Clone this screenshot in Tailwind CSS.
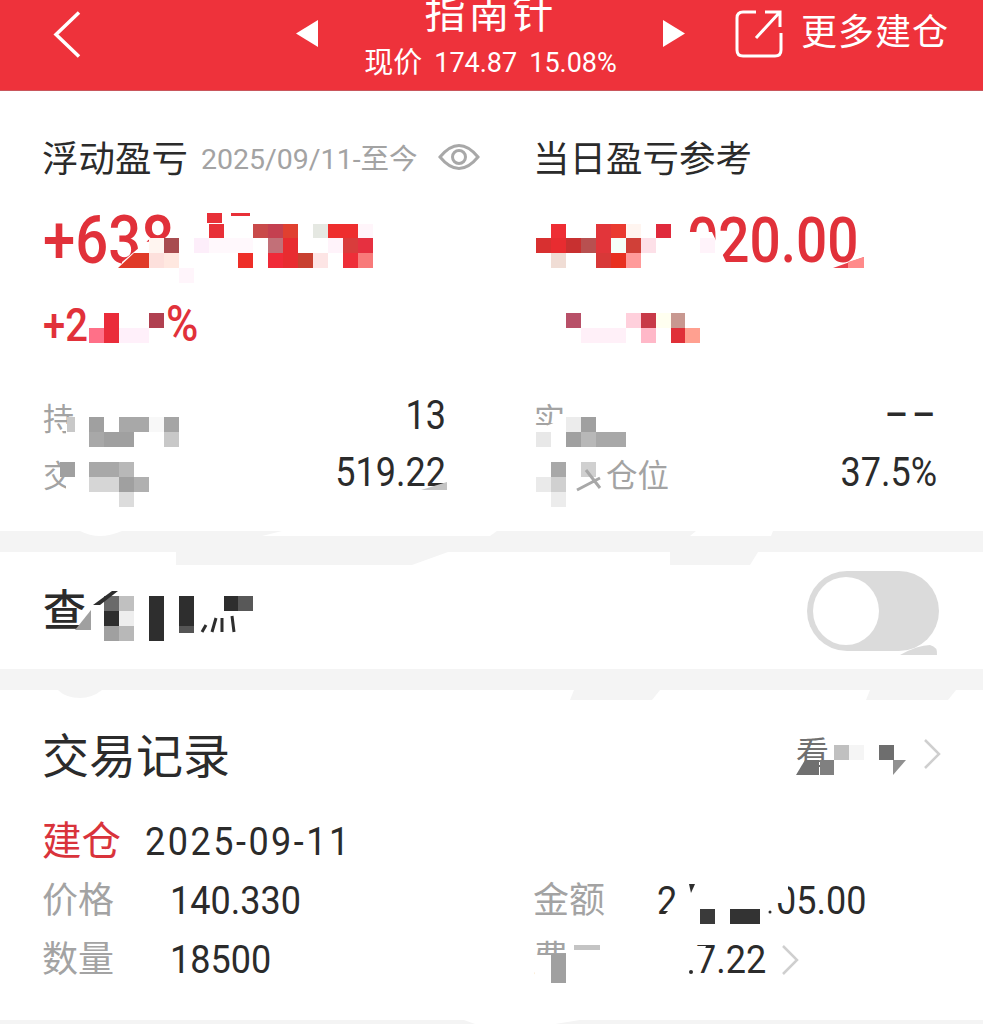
<!DOCTYPE html>
<html lang="zh">
<head>
  <meta charset="UTF-8" />
  <title>指南针</title>
  <script src="https://cdn.jsdelivr.net/npm/@tailwindcss/browser@4"></script>
</head>
<body class="bg-white">
  <div class="relative w-[983px] h-[1024px] overflow-hidden bg-white text-[#2b2b2b] font-['Roboto','Noto_Sans_CJK_SC',sans-serif]">

    <!-- Header -->
    <header class="h-[91px] bg-[#ee323b] border-b border-b-[#c9565c] flex items-start text-white overflow-hidden">
      <svg class="ml-[53px] mt-[11px] w-[28px] h-[47px]" viewBox="0 0 28 47" fill="none" stroke="white" stroke-width="3.5"><path d="M26 1.5 3 23.5 26 45.5"/></svg>
      <svg class="ml-[215px] mt-[20px] w-[22px] h-[27px]" viewBox="0 0 22 27" fill="white"><path d="M22 0V27L0 13.5Z"/></svg>
      <div class="w-[345px] flex flex-col items-center">
        <div class="text-[41px] leading-[44px] mt-[-8px] tracking-[3px]">指南针</div>
        <div class="flex items-center gap-[12px] text-[27px] leading-[32px] mt-[11px] whitespace-nowrap"><span class="text-[29px]">现价</span><span>174.87</span><span>15.08%</span></div>
      </div>
      <svg class="mt-[20px] w-[22px] h-[27px]" viewBox="0 0 22 27" fill="white"><path d="M0 0V27L22 13.5Z"/></svg>
      <svg class="ml-[50px] mt-[9px] w-[49px] h-[50px]" viewBox="0 0 49 50" fill="none" stroke="white" stroke-width="3"><path d="M21 3H8Q2 3 2 9V41Q2 47 8 47H40Q46 47 46 41V24"/><path d="M21 29 44 4M30 3H45V18"/></svg>
      <div class="ml-[17px] mt-[12px] text-[36px] leading-[42px] tracking-[1px] whitespace-nowrap">更多建仓</div>
    </header>

    <!-- Summary -->
    <section class="h-[440px] grid grid-cols-[491px_1fr] pl-[43px]">
      <div class="flex flex-col">
        <div class="flex items-center h-[46px] mt-[46px]">
          <span class="text-[36.5px] ml-[-1px]">浮动盈亏</span>
          <span class="ml-[13px] text-[28.5px] text-[#a3a3a3] whitespace-nowrap">2025/09/11-至今</span>
          <svg class="ml-[20px] w-[42px] h-[30px] mt-[-6px]" viewBox="0 0 42 30" fill="none" stroke="#a8a8a8" stroke-width="3"><path d="M2 15Q21 -8 40 15 21 38 2 15Z"/><circle cx="21" cy="15" r="6.5"/></svg>
        </div>
        <div class="mt-[28px] h-[58px] text-[58px] leading-[58px] font-medium text-[#e1313a] origin-center scale-y-115">+638</div>
        <div class="mt-[33px] h-[44px] text-[40px] leading-[44px] font-medium text-[#e1313a] origin-center scale-y-115">+2<span class="ml-[78px] text-[44px]">%</span></div>
        <div class="mt-[47px] w-[403px] flex justify-between items-center h-[44px]"><span class="text-[31px] text-[#a3a3a3] mt-[10px]">持</span><span class="text-[36px] origin-center scale-y-115">13</span></div>
        <div class="mt-[13px] w-[403px] flex justify-between items-center h-[44px]"><span class="text-[31px] text-[#a3a3a3] mt-[10px]">交</span><span class="text-[36px] origin-center scale-y-115">519.22</span></div>
      </div>
      <div class="flex flex-col">
        <div class="flex items-center h-[46px] mt-[46px]"><span class="text-[36.5px] ml-[-1px]">当日盈亏参考</span></div>
        <div class="mt-[28px] h-[58px] pl-[153px] text-[55px] leading-[58px] font-medium text-[#e1313a] origin-center scale-y-115">020.00</div>
        <div class="mt-[33px] h-[44px]"></div>
        <div class="mt-[47px] w-[403px] flex justify-between items-center h-[44px]"><span class="text-[31px] text-[#a3a3a3] mt-[10px]">实</span><span class="text-[36px] font-medium tracking-[4px] mr-[-2px]">––</span></div>
        <div class="mt-[13px] w-[403px] flex justify-between items-center h-[44px]"><span class="text-[31.5px] text-[#a3a3a3] pl-[72px] mt-[10px]">仓位</span><span class="text-[36px] origin-center scale-y-115">37.5%</span></div>
      </div>
    </section>

    <div class="h-[21px] bg-[#f4f4f4]"></div>

    <!-- Toggle row -->
    <section class="h-[117px] pl-[43px] pr-[43px] flex items-center justify-between">
      <span class="text-[43px] mt-[2px] font-medium">查</span>
      <svg class="w-[134px] h-[86px] mt-[6px]" viewBox="0 0 134 86">
        <rect x="1" y="0" width="132" height="80" rx="40" fill="#dbdbdb"/>
        <path d="M94 84Q112 74 124 74 132 76 131 84Z" fill="#dbdbdb"/>
        <ellipse cx="40" cy="40" rx="33" ry="34" fill="white"/>
      </svg>
    </section>

    <div class="h-[21px] bg-[#f4f4f4]"></div>

    <!-- Trade records -->
    <section class="pl-[43px]">
      <div class="h-[134px] pt-[42px] flex items-start justify-between pr-[42px]">
        <span class="text-[47px] leading-[50px] ml-[-1px]">交易记录</span>
        <div class="flex items-center h-[40px] mt-[2px]">
          <span class="text-[33px] text-[#707070] mr-[94px]">看</span>
          <svg class="w-[18px] h-[30px]" viewBox="0 0 18 30" fill="none" stroke="#cfcfcf" stroke-width="2.5"><path d="M2 1 16 15 2 29"/></svg>
        </div>
      </div>
      <div class="flex items-center h-[44px] mt-[-4px]">
        <span class="text-[39.5px] text-[#d9333b] ml-[-1px]">建仓</span>
        <span class="ml-[24px] text-[36px] tracking-[2.5px] origin-center scale-y-110">2025-09-11</span>
      </div>
      <div class="grid grid-cols-[491px_1fr] mt-[15px] gap-y-[15px]">
        <div class="flex items-center h-[44px]"><span class="w-[128px] text-[36px] text-[#a3a3a3] ml-[-1px]">价格</span><span class="text-[36px] origin-center scale-y-110">140.330</span></div>
        <div class="flex items-center h-[44px]"><span class="w-[124px] text-[36px] text-[#a3a3a3] ml-[-1px]">金额</span><span class="text-[36px] w-[119px] origin-center scale-y-110">2</span><span class="text-[36px] origin-center scale-y-110">05.00</span></div>
        <div class="flex items-center h-[44px]"><span class="w-[128px] text-[36px] text-[#a3a3a3] ml-[-1px]">数量</span><span class="text-[36px] origin-center scale-y-110">18500</span></div>
        <div class="flex items-center h-[44px]"><span class="w-[163px] text-[36px] text-[#a3a3a3] ml-[-1px]">费</span><span class="text-[36px] w-[64px] text-right origin-center scale-y-110">7.22</span><svg class="ml-[21px] w-[18px] h-[30px]" viewBox="0 0 18 30" fill="none" stroke="#cfcfcf" stroke-width="2.5"><path d="M2 1 16 15 2 29"/></svg></div>
      </div>
    </section>
    <div class="absolute left-0 right-0 top-[1020px] h-[4px] bg-[#f4f4f4]"></div>

    <!-- Mosaic over the hidden figures: cells sit on a 14.9px grid, so rects are in grid units -->
    <svg class="absolute inset-0 w-[983px] h-[1024px] pointer-events-none" viewBox="0 0 983 1024">
      <!-- torn edges of the grey bands -->
      <g fill="#f4f4f4">
        <path d="M176 552H448L412 565H176Z"/><path d="M670 552H758L750 565H670Z"/>
        <path d="M574 690H660L652 700H570Z"/><path d="M870 690H956L948 700H866Z"/>
        <path d="M58 690H102Q92 698 80 698 66 698 58 690Z"/>
      </g>
      <g fill="white">
        <path d="M80 531H122Q110 536 100 536 90 536 80 531Z"/><path d="M282 531 262 536H490L497 531Z"/><path d="M696 531 690 536H771L773 531Z"/>
        <path d="M464 1020 475 1024H555L580 1020Z"/>
        <!-- masks over text under the mosaic -->
        <path d="M122 262 146 242 178 238H185V275H122Z"/>
        <path d="M686 280 726 262 712 232H680V280Z"/>
        <path d="M770 880H788V903H770Z"/>
        <path d="M655 925 682 896V930H655Z"/>
        <path d="M692 946H706L692 985Z"/>
        <path d="M66 424H90V445H66Z"/><path d="M66 476H90V500H66Z"/>
        <path d="M536 430 566 418V450H536Z"/>
        <path d="M535 955H551V985H535Z"/><path d="M566 950H580V985H566Z"/>
        <path d="M78 632 92 600V640H70Z"/>
      </g>
      <g transform="scale(14.9)" shape-rendering="crispEdges">
        <!-- floating value, left -->
        <rect x="14" y="15" width="1" height="1" fill="#e83038"/><rect x="17" y="15" width="1" height="1" fill="#c94a4a"/><rect x="18" y="15" width="1" height="1" fill="#c44050"/><rect x="19" y="15" width="1" height="1" fill="#e04030"/><rect x="21" y="15" width="1" height="1" fill="#e5e8e2"/><rect x="22" y="15" width="2" height="1" fill="#ee2e2e"/><rect x="24" y="15" width="1" height="1" fill="#fff5fa"/>
        <rect x="10" y="16" width="1" height="1" fill="#fff5f0"/><rect x="11" y="16" width="1" height="1" fill="#a84c50"/><rect x="13" y="16" width="1" height="1" fill="#fdeefa"/><rect x="14" y="16" width="3" height="1" fill="#fff8fc"/><rect x="18" y="16" width="1" height="1" fill="#c27078"/><rect x="19" y="16" width="1" height="1" fill="#e82c30"/><rect x="22" y="16" width="1" height="1" fill="#fff3fa"/><rect x="23" y="16" width="1" height="1" fill="#d93c3c"/><rect x="24" y="16" width="1" height="1" fill="#e63040"/>
        <rect x="9" y="17" width="1" height="1" fill="#e03a28"/><rect x="10" y="17" width="1" height="1" fill="#fde0dc"/><rect x="11" y="17" width="1" height="1" fill="#ffe8e0"/><rect x="16" y="17" width="1" height="1" fill="#ee2e28"/><rect x="18" y="17" width="1" height="1" fill="#f02a38"/><rect x="19" y="17" width="1" height="1" fill="#e82c30"/><rect x="20" y="17" width="1" height="1" fill="#c84030"/><rect x="21" y="17" width="1" height="1" fill="#fde5e5"/><rect x="23" y="17" width="1" height="1" fill="#ee2e38"/><rect x="24" y="17" width="1" height="1" fill="#f87a7a"/>
        <rect x="12" y="18" width="1" height="1" fill="#fff5fb"/>
        <!-- percent, left -->
        <rect x="7" y="21" width="1" height="2" fill="#ea2c3a"/><rect x="6" y="22" width="1" height="1" fill="#ff7088"/><rect x="8" y="22" width="2" height="1" fill="#fff0fa"/><rect x="10" y="21" width="1" height="1" fill="#b04050"/>
        <!-- stats, left -->
        <rect x="6" y="28" width="1" height="1" fill="#a0a0a0"/><rect x="8" y="28" width="2" height="1" fill="#a8a8a8"/><rect x="10" y="28" width="1" height="1" fill="#f8f8f8"/><rect x="11" y="28" width="1" height="1" fill="#a5a5a5"/>
        <rect x="6" y="29" width="1" height="1" fill="#a8a8a8"/><rect x="7" y="29" width="2" height="1" fill="#a0a0a0"/><rect x="11" y="29" width="1" height="1" fill="#c8c8c8"/>
        <rect x="4.5" y="28" width="0.5" height="1" fill="#c8c8c8"/><rect x="4" y="31" width="1" height="1" fill="#a0a0a0"/>
        <rect x="6" y="31" width="2" height="1" fill="#a8a8a8"/><rect x="8" y="31" width="1" height="1" fill="#b8b8b8"/>
        <rect x="6" y="32" width="2" height="1" fill="#d6d6d6"/><rect x="8" y="32" width="1" height="1" fill="#a0a0a0"/><rect x="9" y="32" width="1" height="1" fill="#b0b0b0"/><rect x="8" y="33" width="1" height="1" fill="#dcdcdc"/>
        <!-- today's value, right -->
        <rect x="37" y="15" width="1" height="1" fill="#ee2e34"/><rect x="40" y="15" width="1" height="1" fill="#e2353a"/><rect x="41" y="15" width="1" height="1" fill="#ea3a30"/><rect x="42" y="15" width="1" height="1" fill="#fff5f0"/><rect x="44" y="15" width="1" height="1" fill="#e02a3c"/>
        <rect x="36" y="16" width="1" height="1" fill="#d83030"/><rect x="37" y="16" width="1" height="1" fill="#e82c30"/><rect x="38" y="16" width="1" height="1" fill="#c83030"/><rect x="39" y="16" width="1" height="1" fill="#b85050"/><rect x="40" y="16" width="1" height="1" fill="#e2353a"/><rect x="41" y="16" width="1" height="1" fill="#f5fff8"/><rect x="42" y="16" width="1" height="1" fill="#d04038"/><rect x="43" y="16" width="1" height="1" fill="#fde0e8"/><rect x="47" y="16" width="1" height="1" fill="#fff3fa"/>
        <rect x="37" y="17" width="1" height="1" fill="#f0ddd5"/><rect x="40" y="17" width="1" height="1" fill="#d83838"/><rect x="41" y="17" width="1" height="1" fill="#e83020"/><rect x="42" y="17" width="1" height="1" fill="#ff9a9a"/>
        <!-- percent, right -->
        <rect x="38" y="21" width="1" height="1" fill="#b85068"/><rect x="42" y="21" width="1" height="1" fill="#ffd0dc"/><rect x="43" y="21" width="1" height="1" fill="#c83a48"/><rect x="44" y="21" width="1" height="1" fill="#fffff0"/><rect x="45" y="21" width="1" height="1" fill="#c89890"/>
        <rect x="39" y="22" width="3" height="1" fill="#fff0f8"/><rect x="43" y="22" width="1" height="1" fill="#ffb8c8"/><rect x="45" y="22" width="1" height="1" fill="#e03038"/><rect x="46" y="22" width="1" height="1" fill="#ffa090"/>
        <!-- stats, right -->
        <rect x="38" y="28" width="1" height="1" fill="#ececec"/><rect x="39" y="28" width="1" height="1" fill="#a0a0a0"/>
        <rect x="36" y="29" width="1" height="1" fill="#e8e8e8"/><rect x="38" y="29" width="1" height="1" fill="#a0a0a0"/><rect x="39" y="29" width="1" height="1" fill="#b8b8b8"/><rect x="40" y="29" width="2" height="1" fill="#a8a8a8"/>
        <rect x="37" y="31" width="1" height="1" fill="#a8a8a8"/><rect x="39" y="31" width="1" height="1" fill="#d0d0d0"/>
        <rect x="36" y="32" width="1" height="1" fill="#eaeaea"/><rect x="37" y="32" width="1" height="1" fill="#d0d0d0"/><rect x="37" y="33" width="1" height="1" fill="#ececec"/>
        <!-- toggle row label -->
        <rect x="7" y="40" width="1" height="1" fill="#6a6a6a"/><rect x="8" y="40" width="1" height="1" fill="#c0c0c0"/><rect x="10" y="40" width="1" height="3" fill="#2e2e2e"/><rect x="12" y="40" width="1" height="2" fill="#2e2e2e"/><rect x="15" y="40" width="1" height="1" fill="#2e2e2e"/><rect x="16" y="40" width="1" height="1" fill="#585858"/>
        <rect x="7" y="41" width="1" height="1" fill="#2e2e2e"/><rect x="8" y="41" width="1" height="1" fill="#eeeeee"/><rect x="7" y="42" width="1" height="1" fill="#a0a0a0"/><rect x="8" y="42" width="1" height="1" fill="#b8b8b8"/><rect x="12" y="42" width="1" height="0.5" fill="#555555"/>
        <!-- view all -->
        <rect x="56" y="50" width="1" height="1" fill="#c0c0c0"/><rect x="57" y="50" width="1" height="1" fill="#f5f5f5"/><rect x="59" y="50" width="1" height="1" fill="#6e6e6e"/><rect x="55" y="51" width="1" height="1" fill="#808080"/>
        <!-- amount and fee -->
        <rect x="47" y="61" width="1" height="1" fill="#3a3a3a"/><rect x="49" y="61" width="2" height="1" fill="#333333"/><rect x="37" y="64" width="1" height="2" fill="#a0a0a0"/>
      </g>
      <!-- cut digit pieces and cell corners -->
      <path d="M118 268 134 253V268Z" fill="#e03a28"/>
      <path d="M207 213 222 213V223H207Z" fill="#e83038"/><path d="M231 213H250V216H231Z" fill="#e83038"/>
      <path d="M833 268 864 257V268Z" fill="#e8404a"/><path d="M848 262 864 257V268H848Z" fill="#ff8a8a"/>
      <path d="M805 760H819V775H796Z" fill="#707070"/><path d="M893 760H906L893 775Z" fill="#909090"/>
      <path d="M202 632 206 625M212 632 216 618M222 632 222 618M234 632 232 616" stroke="#2e2e2e" stroke-width="3"/>
      <path d="M75 630 91 610V630Z" fill="#a0a0a0"/><path d="M93 605 112 591H118L100 605Z" fill="#2e2e2e"/>
      <path d="M421 490 447 482V490Z" fill="#c4c4c4"/>
      <path d="M577 490 600 478M586 470 600 488" stroke="#a8a8a8" stroke-width="3" fill="none"/>
      <circle cx="691" cy="972" r="2" fill="#2e2e2e"/><circle cx="770" cy="912" r="1.5" fill="#2e2e2e"/><path d="M689 884H695L691 893Z" fill="#2e2e2e"/>
      <path d="M574 945H600V950H574Z" fill="#c4c4c4"/>
    </svg>
  </div>
</body>
</html>
